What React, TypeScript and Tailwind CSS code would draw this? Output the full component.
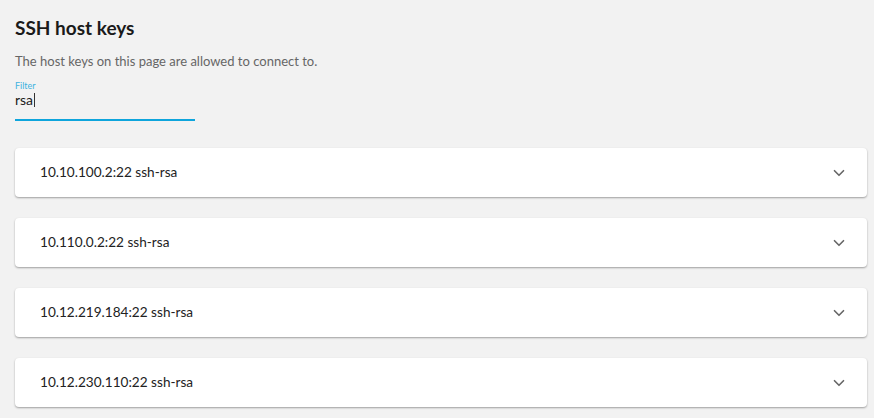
import { ChevronDown } from "lucide-react";

const hosts = [
  "10.10.100.2:22 ssh-rsa",
  "10.110.0.2:22 ssh-rsa",
  "10.12.219.184:22 ssh-rsa",
  "10.12.230.110:22 ssh-rsa",
];

export default function App() {
  return (
    <div className="min-h-screen bg-[#f2f2f2] pl-[15px] pr-[7px] pt-[16px] font-['Lato',sans-serif] text-[#1a1a1a]">
      <h1 className="text-[19px] font-bold leading-[24px]">SSH host keys</h1>
      <p className="mt-[12px] text-[13px] leading-[18px] text-[#666]">
        The host keys on this page are allowed to connect to.
      </p>
      <div className="mt-[10px] w-[180px] border-b-2 border-[#0ea5dc]">
        <div className="text-[9px] leading-[11px] text-[#3eb2e0]">Filter</div>
        <div className="flex items-center pb-[11px] text-[14px] leading-[17px]">
          rsa<span className="ml-[1px] inline-block h-[14px] w-px bg-[#333]" />
        </div>
      </div>
      <div className="mt-[27px] flex flex-col gap-[21px]">
        {hosts.map((h) => (
          <div
            key={h}
            className="flex h-[49px] items-center justify-between rounded-[4px] bg-white pl-[25px] pr-[19px] shadow-[0_1px_2px_rgba(0,0,0,0.35)]"
          >
            <span className="text-[13.6px] text-[#222]">{h}</span>
            <ChevronDown size={18} strokeWidth={2.2} className="text-[#666]" />
          </div>
        ))}
      </div>
    </div>
  );
}
